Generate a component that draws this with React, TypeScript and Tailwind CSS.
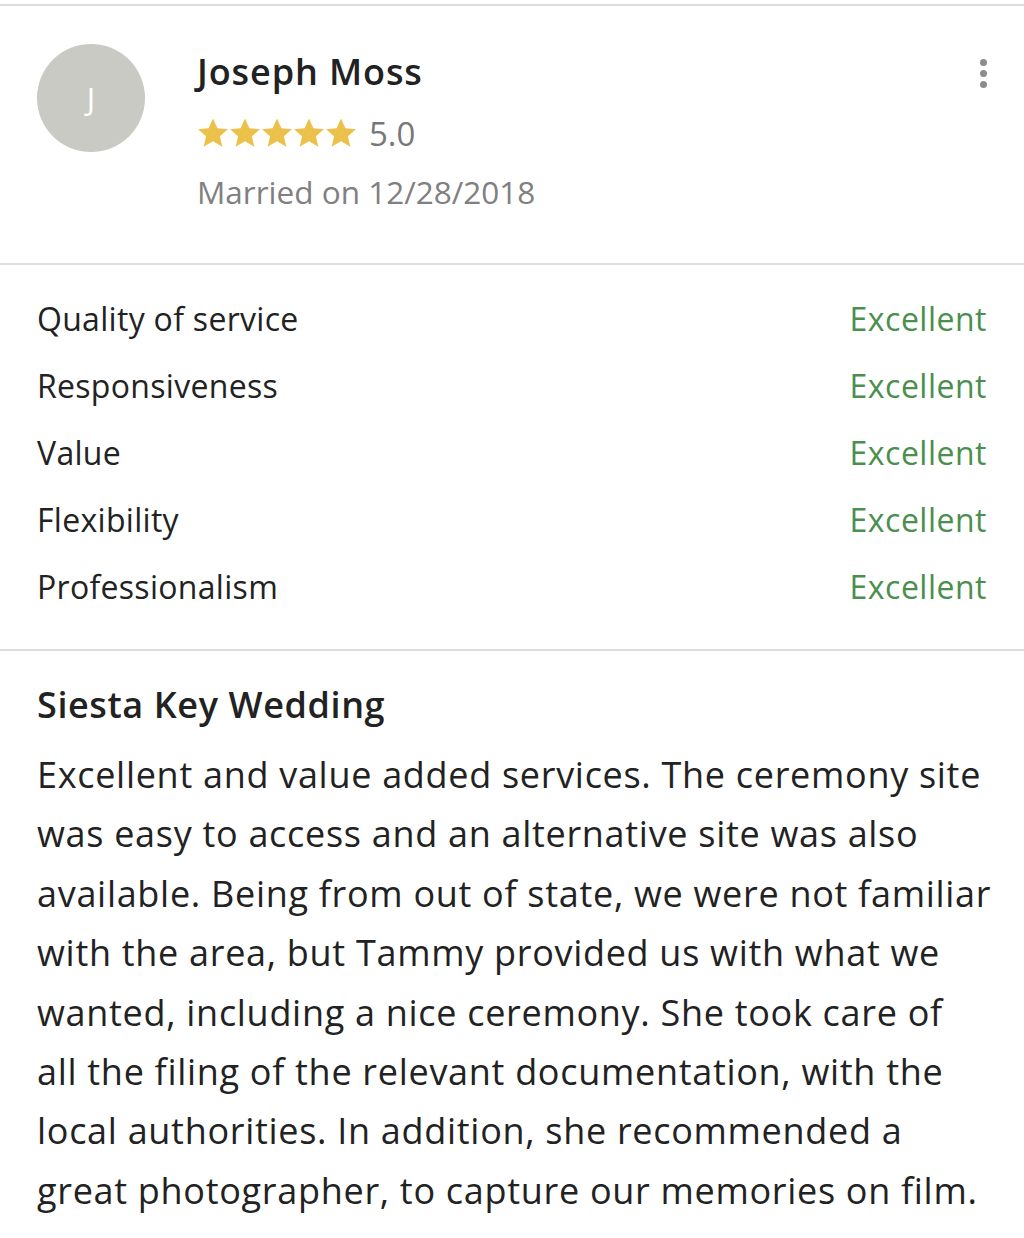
import React from "react";

const ratings = [
  "Quality of service",
  "Responsiveness",
  "Value",
  "Flexibility",
  "Professionalism",
];

function Star() {
  return (
    <svg viewBox="0 0 24 24" className="w-[32px] h-[33px]" fill="#ecc14a">
      <path d="M12 0.8l3.3 7.2 7.9.8-6 5.3 1.8 7.8L12 17.8l-7 4.1 1.8-7.8-6-5.3 7.9-.8z" />
    </svg>
  );
}

export default function App() {
  return (
    <div
      className="w-[1024px] h-[1238px] bg-white text-[#222] overflow-hidden"
      style={{ fontFamily: "'Open Sans', Lato, sans-serif" }}
    >
      <div className="h-[4px]" />
      <div className="h-[2px] bg-[#dddddd]" />

      {/* Header */}
      <div className="h-[257px] flex items-start pl-[37px] pr-[37px] pt-[38px]">
        <div className="w-[108px] h-[108px] rounded-full bg-[#c9cac4] flex items-center justify-center text-white text-[31px] shrink-0">
          J
        </div>
        <div className="ml-[52px] flex-1">
          <div className="text-[36px] font-semibold leading-[44px] mt-[6px] tracking-[0.9px]">Joseph Moss</div>
          <div className="flex items-center mt-[23px]">
            <div className="flex">
              <Star />
              <Star />
              <Star />
              <Star />
              <Star />
            </div>
            <span className="ml-[12px] text-[33px] text-[#777] leading-none">5.0</span>
          </div>
          <div className="text-[31.5px] text-[#808080] mt-[26px] leading-none">
            Married on 12/28/2018
          </div>
        </div>
        <div className="flex flex-col gap-[4px] mt-[15px]">
          <span className="w-[7px] h-[7px] rounded-full bg-[#8c8c8c]" />
          <span className="w-[7px] h-[7px] rounded-full bg-[#8c8c8c]" />
          <span className="w-[7px] h-[7px] rounded-full bg-[#8c8c8c]" />
        </div>
      </div>

      <div className="h-[2px] bg-[#dddddd]" />

      {/* Ratings */}
      <div className="h-[384px] pt-[20px] px-[37px]">
        {ratings.map((r) => (
          <div key={r} className="h-[67px] flex items-center justify-between text-[32px] tracking-[0.3px]">
            <span>{r}</span>
            <span className="text-[#4a8f4e] font-medium tracking-[0.5px]">Excellent</span>
          </div>
        ))}
      </div>

      <div className="h-[2px] bg-[#dddddd]" />

      {/* Review */}
      <div className="px-[37px] pt-[32px]">
        <div className="text-[36px] font-semibold leading-[44px] tracking-[0.6px]">Siesta Key Wedding</div>
        <p className="text-[36px] leading-[59.4px] mt-[18px] tracking-[0.7px] whitespace-nowrap">
          Excellent and value added services. The ceremony site
          <br />
          was easy to access and an alternative site was also
          <br />
          available. Being from out of state, we were not familiar
          <br />
          with the area, but Tammy provided us with what we
          <br />
          wanted, including a nice ceremony. She took care of
          <br />
          all the filing of the relevant documentation, with the
          <br />
          local authorities. In addition, she recommended a
          <br />
          great photographer, to capture our memories on film.
        </p>
      </div>
    </div>
  );
}
